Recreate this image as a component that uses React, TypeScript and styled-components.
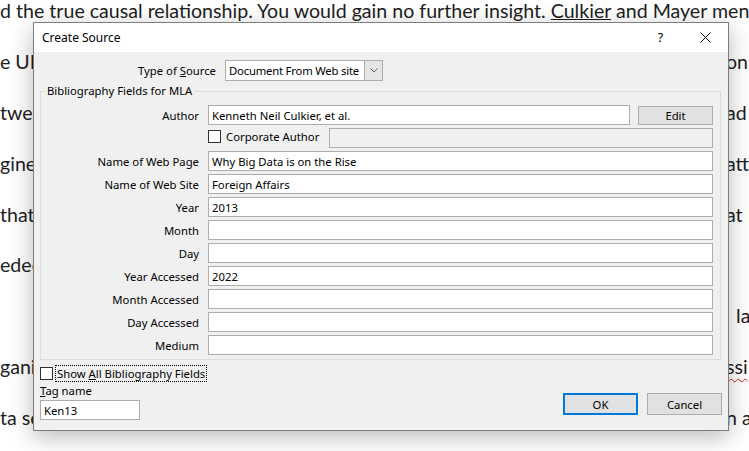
import React from 'react';
import styled, { createGlobalStyle } from 'styled-components';

const GlobalStyle = createGlobalStyle`
  html, body {
    margin: 0;
    padding: 0;
    background: #fff;
  }
  body {
    width: 749px;
    height: 451px;
    overflow: hidden;
  }
`;

const Page = styled.div`
  position: relative;
  width: 749px;
  height: 451px;
  overflow: hidden;
  background: #fff;
`;

/* the Word document behind the dialog */
const Doc = styled.div`
  margin-top: -14px;
  font-family: Lato, 'Liberation Sans', sans-serif;
  font-size: 19.6px;
  color: #1e1e1e;
`;

const DocLine = styled.div<{ $split?: boolean }>`
  display: ${(p) => (p.$split ? 'grid' : 'block')};
  grid-template-columns: 726px 1fr;
  height: 50.9px;
  line-height: 50.9px;
  white-space: pre;
  overflow: hidden;
`;

const DocPart = styled.span`
  overflow: hidden;
`;

const Underlined = styled.span`
  text-decoration: underline;
  text-decoration-color: #1e1e1e;
`;

const Misspelled = styled.span`
  text-decoration: underline wavy #d0201a;
  text-decoration-thickness: 1px;
  text-underline-offset: 4px;
`;

/* dialog */
const Dialog = styled.div`
  position: absolute;
  left: 33px;
  top: 22px;
  width: 696px;
  height: 409px;
  box-sizing: border-box;
  border: 1px solid #7d7d7d;
  background: #f0f0f0;
  box-shadow: 0 6px 22px rgba(0, 0, 0, 0.28);
  display: flex;
  flex-direction: column;
  font-family: 'Noto Sans', 'Open Sans', sans-serif;
  font-size: 11.3px;
  color: #000;
`;

const TitleBar = styled.div`
  height: 29px;
  background: #fff;
  display: flex;
  align-items: center;
  padding-left: 8px;
`;

const Title = styled.span`
  flex: 1;
  font-size: 12px;
`;

const TitleButton = styled.div`
  width: 45px;
  height: 29px;
  display: flex;
  align-items: center;
  justify-content: center;
  font-size: 12.5px;
`;

const Body = styled.div`
  flex: 1;
  display: flex;
  flex-direction: column;
  padding: 8px 6px 0 6px;
`;

const TypeRow = styled.div`
  display: flex;
  align-items: center;
  gap: 9px;
  height: 21px;
`;

const RowLabel = styled.label<{ $width: number }>`
  width: ${(p) => p.$width}px;
  text-align: right;
  white-space: nowrap;
`;

const Select = styled.div`
  width: 158px;
  height: 21px;
  box-sizing: border-box;
  border: 1px solid #adadad;
  background: #fff;
  display: flex;
  align-items: stretch;
`;

const SelectValue = styled.span`
  flex: 1;
  display: flex;
  align-items: center;
  padding-left: 3px;
  letter-spacing: -0.2px;
  white-space: nowrap;
  overflow: hidden;
`;

const SelectArrow = styled.span`
  width: 17px;
  border-left: 1px solid #adadad;
  background: #e5e5e5;
  display: flex;
  align-items: center;
  justify-content: center;
`;

const Fieldset = styled.fieldset`
  margin: 2px 1px 0 0;
  padding: 6px 7px 4px 0;
  border: 1px solid #dcdcdc;
  min-width: 0;
`;

const Legend = styled.legend`
  margin-left: 4px;
  padding: 0 2px;
  line-height: 16px;
`;

const FieldGrid = styled.div`
  display: grid;
  grid-template-columns: 158px 505px;
  grid-auto-rows: 20px;
  column-gap: 9px;
  row-gap: 3px;
  align-items: center;
`;

const Cell = styled.div<{ $gap?: number }>`
  display: flex;
  align-items: center;
  gap: ${(p) => p.$gap ?? 0}px;
  height: 20px;
`;

const TextBox = styled.div<{ $width?: number; $disabled?: boolean }>`
  width: ${(p) => (p.$width ? `${p.$width}px` : '100%')};
  height: 20px;
  box-sizing: border-box;
  border: 1px solid #adadad;
  background: ${(p) => (p.$disabled ? '#f0f0f0' : '#fff')};
  padding-left: 3px;
  margin-left: ${(p) => (p.$disabled ? 'auto' : '0')};
  display: flex;
  align-items: center;
  white-space: nowrap;
`;

const Button = styled.div<{ $width: number; $height: number; $default?: boolean }>`
  width: ${(p) => p.$width}px;
  height: ${(p) => p.$height}px;
  box-sizing: border-box;
  border: ${(p) => (p.$default ? '2px solid #0078d7' : '1px solid #adadad')};
  background: #e1e1e1;
  display: flex;
  align-items: center;
  justify-content: center;
`;

const CheckBox = styled.span`
  width: 13px;
  height: 13px;
  box-sizing: border-box;
  border: 1px solid #333;
  background: #fff;
  flex: none;
`;

const CheckRow = styled.div<{ $gap: number; $lift?: number }>`
  display: flex;
  align-items: center;
  gap: ${(p) => p.$gap}px;
  margin-top: ${(p) => -(p.$lift ?? 0)}px;
`;

const FocusText = styled.span`
  border: 1px dotted #000;
  padding: 0 1px;
  line-height: 15px;
  white-space: nowrap;
`;

const Footer = styled.div`
  display: flex;
  justify-content: space-between;
  align-items: flex-start;
  margin-top: 5px;
`;

const FooterLeft = styled.div`
  display: flex;
  flex-direction: column;
`;

const TagLabel = styled.span`
  margin-top: 2px;
  line-height: 14px;
  margin-bottom: 2px;
`;

const Buttons = styled.div`
  display: flex;
  gap: 9px;
  margin-top: 28px;
`;

const fields: { label: string; value?: string }[] = [
  { label: 'Name of Web Page', value: 'Why Big Data is on the Rise' },
  { label: 'Name of Web Site', value: 'Foreign Affairs' },
  { label: 'Year', value: '2013' },
  { label: 'Month' },
  { label: 'Day' },
  { label: 'Year Accessed', value: '2022' },
  { label: 'Month Accessed' },
  { label: 'Day Accessed' },
  { label: 'Medium' },
];

// only the ends of each line show beside the dialog
const docLines: [string, React.ReactNode][] = [
  ['e UPS', 'on'],
  ['tween', 'ad'],
  ['gineers', 'att'],
  ['that', 'at'],
  ['edecessors', ''],
  ['', '  la'],
  ['ganizations', <Misspelled key="m">ssi</Misspelled>],
  ['ta sets', 'n ar'],
];

const CloseIcon = () => (
  <svg width="11" height="11" viewBox="0 0 11 11">
    <path d="M0.5 0.5 L10.5 10.5 M10.5 0.5 L0.5 10.5" stroke="#000" strokeWidth="1" fill="none" />
  </svg>
);

const Chevron = () => (
  <svg width="8" height="5" viewBox="0 0 8 5">
    <polyline points="0.5,0.5 4,4 7.5,0.5" stroke="#606060" strokeWidth="1" fill="none" />
  </svg>
);

const App: React.FC = () => {
  return (
    <Page>
      <GlobalStyle />
      <Doc>
        <DocLine>
          d the true causal relationship. You would gain no further insight.{' '}
          <Underlined>
            <Misspelled>Culkier</Misspelled>
          </Underlined>{' '}
          and Mayer mentioned
        </DocLine>
        {docLines.map(([left, right], i) => (
          <DocLine $split key={i}>
            <DocPart>{left}</DocPart>
            <DocPart>{right}</DocPart>
          </DocLine>
        ))}
      </Doc>

      <Dialog>
        <TitleBar>
          <Title>Create Source</Title>
          <TitleButton>?</TitleButton>
          <TitleButton>
            <CloseIcon />
          </TitleButton>
        </TitleBar>

        <Body>
          <TypeRow>
            <RowLabel $width={176}>
              Type of <u>S</u>ource
            </RowLabel>
            <Select>
              <SelectValue>Document From Web site</SelectValue>
              <SelectArrow>
                <Chevron />
              </SelectArrow>
            </Select>
          </TypeRow>

          <Fieldset>
            <Legend>Bibliography Fields for MLA</Legend>
            <FieldGrid>
              <RowLabel $width={158}>Author</RowLabel>
              <Cell $gap={8}>
                <TextBox $width={422}>Kenneth Neil Culkier, et al.</TextBox>
                <Button $width={75} $height={19}>Edit</Button>
              </Cell>

              <span />
              <Cell>
                <CheckRow $gap={5} $lift={3}>
                  <CheckBox />
                  <span>Corporate Author</span>
                </CheckRow>
                <TextBox $width={384} $disabled />
              </Cell>

              {fields.map((f) => (
                <React.Fragment key={f.label}>
                  <RowLabel $width={158}>{f.label}</RowLabel>
                  <TextBox>{f.value}</TextBox>
                </React.Fragment>
              ))}
            </FieldGrid>
          </Fieldset>

          <Footer>
            <FooterLeft>
              <CheckRow $gap={2}>
                <CheckBox />
                <FocusText>
                  Show <u>A</u>ll Bibliography Fields
                </FocusText>
              </CheckRow>
              <TagLabel>
                <u>T</u>ag name
              </TagLabel>
              <TextBox $width={100}>Ken13</TextBox>
            </FooterLeft>
            <Buttons>
              <Button $width={75} $height={22} $default>
                OK
              </Button>
              <Button $width={75} $height={22}>
                Cancel
              </Button>
            </Buttons>
          </Footer>
        </Body>
      </Dialog>
    </Page>
  );
};

export default App;
